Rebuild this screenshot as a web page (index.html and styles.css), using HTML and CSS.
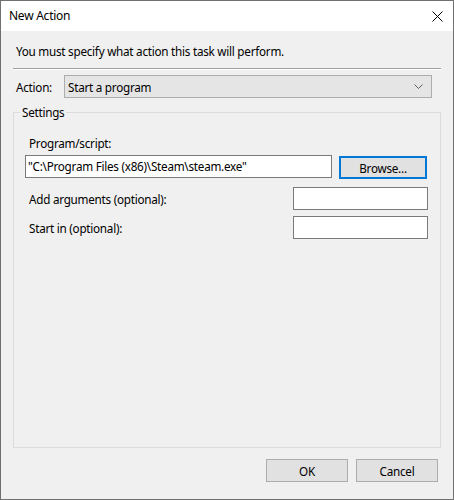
FILE: index.html
```html
<!DOCTYPE html>
<html>
<head>
<meta charset="utf-8">
<title>New Action</title>
<link rel="stylesheet" href="styles.css">
</head>
<body>
<div class="window">
  <div class="titlebar">
    <span class="title">New Action</span>
    <svg class="close" width="12" height="12" viewBox="0 0 12 12"><path d="M0.5 0.5 L10.5 10.5 M10.5 0.5 L0.5 10.5" stroke="#000" stroke-width="1" fill="none"/></svg>
  </div>
  <div class="content">
    <div class="instruction">You must specify what action this task will perform.</div>
    <div class="separator"></div>
    <div class="action-row">
      <span class="action-label">Action:</span>
      <div class="combo">
        <span class="combo-text">Start a program</span>
        <svg class="chevron" width="9" height="5" viewBox="0 0 9 5"><path d="M0.5 0.5 L4.5 4.5 L8.5 0.5" stroke="#606060" stroke-width="1" fill="none"/></svg>
      </div>
    </div>
    <fieldset class="group">
      <legend class="legend">Settings</legend>
      <div class="label prog-label">Program/script:</div>
      <div class="prog-row">
        <div class="textbox prog-box">"C:\Program Files (x86)\Steam\steam.exe"</div>
        <div class="button browse">Browse...</div>
      </div>
      <div class="field-row args-row">
        <span class="label">Add arguments (optional):</span>
        <div class="textbox small-box"></div>
      </div>
      <div class="field-row start-row">
        <span class="label">Start in (optional):</span>
        <div class="textbox small-box"></div>
      </div>
    </fieldset>
    <div class="footer">
      <div class="button">OK</div>
      <div class="button">Cancel</div>
    </div>
  </div>
</div>
</body>
</html>
```

FILE: styles.css
```css
* { box-sizing: border-box; }
html, body { margin: 0; padding: 0; background: #f0f0f0; }
body {
  font-family: "Noto Sans", "Open Sans", sans-serif;
  font-size: 11.7px;
  letter-spacing: -0.25px;
  line-height: 16px;
  color: #000;
}
.window {
  width: 454px;
  height: 500px;
  border: 1px solid #707070;
  display: flex;
  flex-direction: column;
  background: #f0f0f0;
}
.titlebar {
  height: 30px;
  background: #fff;
  display: flex;
  align-items: center;
  justify-content: space-between;
  padding: 0 9px 0 8px;
}
.title { font-size: 12px; }
.close { display: block; margin-top: 1px; }
.content {
  flex: 1;
  display: flex;
  flex-direction: column;
  padding: 12px 0 17px 0;
}
.instruction {
  padding-left: 15px;
  line-height: 17px;
}
.separator {
  margin: 8px 12px 0 12px;
  height: 2px;
  border-top: 1px solid #a0a0a0;
  border-bottom: 1px solid #ffffff;
}
.action-row {
  display: flex;
  align-items: center;
  margin-top: 5px;
  padding-left: 15px;
}
.action-label { width: 48px; }
.combo {
  width: 368px;
  height: 23px;
  border: 1px solid #adadad;
  background: #e5e5e5;
  display: flex;
  align-items: center;
  justify-content: space-between;
  padding: 0 8px 0 3px;
}
.chevron { display: block; }
.group {
  flex: 1;
  margin: 6px 12px 0 12px;
  border: 1px solid #dcdcdc;
  padding: 15px 11px 0 11px;
  min-width: 0;
}
.legend {
  padding: 0 2px;
  margin-left: -5px;
  line-height: 16px;
}
.label { display: block; }
.prog-label { padding-left: 4px; }
.prog-row {
  display: flex;
  align-items: flex-start;
  margin-top: 4px;
}
.textbox {
  height: 23px;
  border: 1px solid #7a7a7a;
  background: #fff;
  padding: 2px 2px;
  white-space: nowrap;
}
.prog-box { width: 307px; }
.button {
  width: 82px;
  height: 23px;
  border: 1px solid #adadad;
  background: #e1e1e1;
  display: flex;
  align-items: center;
  justify-content: center;
}
.browse {
  width: 88px;
  margin-left: 7px;
  margin-top: 1px;
  border: 2px solid #0078d7;
}
.field-row {
  display: flex;
  align-items: center;
  justify-content: space-between;
  padding-left: 4px;
  width: 403px;
}
.args-row { margin-top: 8px; }
.start-row { margin-top: 6px; }
.small-box { width: 135px; }
.footer {
  display: flex;
  justify-content: flex-end;
  gap: 8px;
  margin-top: 11px;
  padding-right: 15px;
}
```
